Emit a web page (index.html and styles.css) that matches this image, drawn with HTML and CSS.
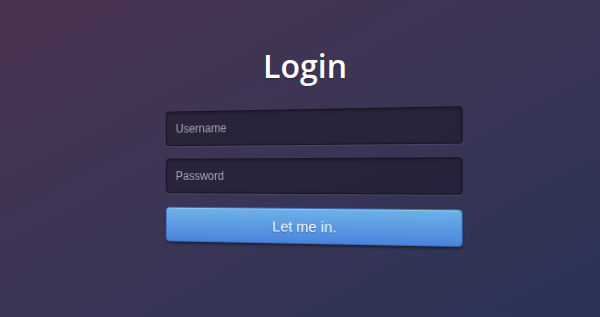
FILE: index.html
```html
<!DOCTYPE html>
<html lang="en">
<head>
<meta charset="utf-8">
<title>Login</title>
<link rel="stylesheet" href="styles.css">
</head>
<body>
<main class="page">
  <h1 class="title">Login</h1>
  <form class="form">
    <input class="field" type="text" placeholder="Username">
    <input class="field" type="password" placeholder="Password">
    <button class="submit" type="button">Let me in.</button>
  </form>
</main>
</body>
</html>
```

FILE: styles.css
```css
html, body {
  margin: 0;
  height: 100%;
}
body {
  width: 600px;
  height: 317px;
  overflow: hidden;
  background: linear-gradient(to bottom right, #4a3350, #3b3555 50%, #2a3357);
  font-family: "Liberation Sans", Arial, sans-serif;
}
.page {
  display: flex;
  flex-direction: column;
  align-items: center;
  padding-left: 10px;
}
.title {
  margin: 44px 0 0;
  font-family: "Open Sans", sans-serif;
  font-weight: 600;
  font-size: 32px;
  line-height: 44px;
  color: #ffffff;
  text-shadow: 0 1px 2px rgba(0, 0, 0, 0.25);
}
.form {
  margin: 21px 0 0 6px;
  width: 304px;
  display: flex;
  flex-direction: column;
  gap: 13px;
  transform: perspective(800px) rotateY(-12.8deg);
}
.field {
  box-sizing: border-box;
  height: 36px;
  margin: 0;
  padding: 0 10px;
  border: 1px solid rgba(0, 0, 0, 0.4);
  border-radius: 4px;
  background: rgba(10, 10, 20, 0.4);
  box-shadow: inset 0 1px 3px rgba(0, 0, 0, 0.35), 0 1px 0 rgba(255, 255, 255, 0.08);
  font-family: "Liberation Sans", Arial, sans-serif;
  font-size: 12px;
  color: #ddd;
  outline: none;
}
.field::placeholder {
  color: #a8a6b0;
}
.submit {
  box-sizing: border-box;
  height: 36px;
  margin-top: 1px;
  padding: 0 8px 0 0;
  border: 1px solid #3a6fc0;
  border-radius: 4px;
  background: linear-gradient(to bottom, #6db2e8, #4a84da);
  box-shadow: inset 0 1px 0 rgba(255, 255, 255, 0.25), 0 2px 3px rgba(0, 0, 0, 0.45);
  font-family: "Liberation Sans", Arial, sans-serif;
  font-size: 15px;
  color: #ffffff;
  text-shadow: 0 1px 1px rgba(0, 0, 0, 0.3);
  cursor: pointer;
}
```
